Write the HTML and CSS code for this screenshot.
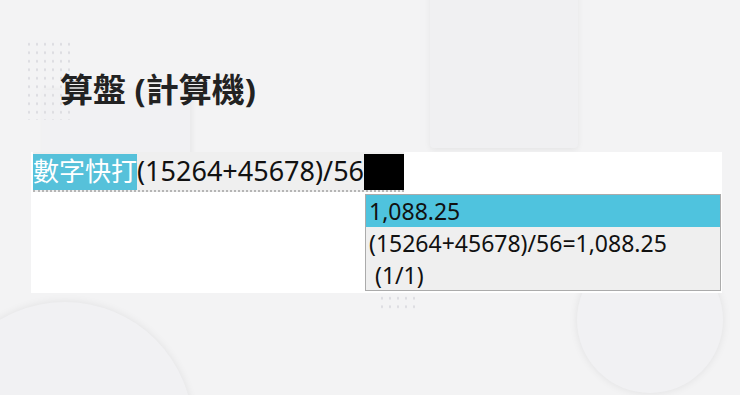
FILE: index.html
```html
<!DOCTYPE html>
<html lang="zh-Hant">
<head>
    <meta charset="UTF-8">
    <meta name="viewport" content="width=device-width, initial-scale=1.0">
    <title>算盤 (計算機)</title>
    <link rel="stylesheet" href="styles.css">
</head>
<body>
    <div class="page">
        <!-- background decoration -->
        <div class="deco square"></div>
        <div class="deco card"></div>
        <div class="deco dots dots-top"></div>
        <div class="deco dots dots-bottom"></div>
        <div class="deco circle circle-left"></div>
        <div class="deco circle circle-right"></div>

        <h1 class="title">算盤 (計算機)</h1>

        <div class="panel">
            <div class="field">
                <span class="mark">數字快打</span><span class="typed">(15264+45678)/56</span><span class="caret"></span>
            </div>
            <div class="dropdown">
                <div class="option selected">1,088.25</div>
                <div class="option">(15264+45678)/56=1,088.25</div>
                <div class="option">&nbsp;(1/1)</div>
            </div>
        </div>
    </div>
</body>
</html>
```

FILE: styles.css
```css
body {
    margin: 0;
    padding: 0;
    background-color: #f3f3f4;
    font-family: "Noto Sans", "Noto Sans CJK TC", sans-serif;
}
.page {
    position: relative;
    width: 740px;
    height: 395px;
    overflow: hidden;
    padding-top: 1px;
    box-sizing: border-box;
}
.deco {
    position: absolute;
}
.square {
    left: 430px;
    top: -10px;
    width: 148px;
    height: 158px;
    background: #f0f0f2;
    border-radius: 4px;
    box-shadow: 0 2px 6px rgba(0,0,0,0.06);
}
.card {
    left: 42px;
    top: 90px;
    width: 148px;
    height: 70px;
    background: #f1f1f3;
    box-shadow: 2px 0 6px rgba(0,0,0,0.05);
}
.dots {
    background-image: radial-gradient(circle, #dcdce0 1px, transparent 1.3px);
    background-size: 8px 8.5px;
}
.dots-top {
    left: 25px;
    top: 40px;
    width: 48px;
    height: 80px;
}
.dots-bottom {
    left: 378px;
    top: 294px;
    width: 40px;
    height: 17px;
}
.circle {
    border-radius: 50%;
    background: #f1f1f3;
    box-shadow: 0 0 8px rgba(0,0,0,0.08);
}
.circle-left {
    left: -63px;
    top: 302px;
    width: 256px;
    height: 256px;
}
.circle-right {
    left: 577px;
    top: 247px;
    width: 146px;
    height: 146px;
}
.title {
    position: relative;
    margin: 63px 0 0 60px;
    font-size: 33px;
    line-height: 52px;
    font-weight: bold;
    color: #222;
}
.panel {
    position: relative;
    margin: 36px 0 0 31px;
    width: 691px;
    height: 141px;
    background: white;
}
.field {
    display: flex;
    align-items: stretch;
    width: fit-content;
    height: 40px;
    margin-left: 2px;
    padding-top: 2px;
    box-sizing: border-box;
    background: #efefef;
    border-bottom: 2px dotted #b5b5b5;
    line-height: 34px;
}
.mark {
    background: #56c1da;
    color: white;
    font-size: 26px;
}
.typed {
    color: #111;
    font-size: 27px;
}
.caret {
    width: 40px;
    background: black;
}
.dropdown {
    margin: 2px 0 0 334px;
    width: 356px;
    height: 97px;
    box-sizing: border-box;
    background: #efefef;
    border: 1px solid #ababab;
    font-size: 23px;
    color: #111;
}
.option {
    height: 32px;
    line-height: 32px;
    padding-left: 3px;
}
.option.selected {
    background: #4fc3de;
}
```
